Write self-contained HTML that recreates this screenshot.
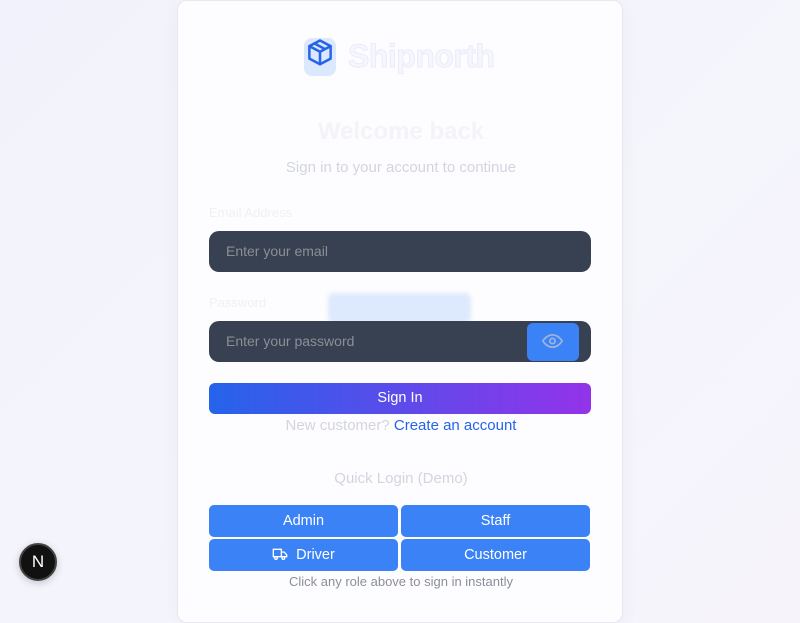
<!DOCTYPE html>
<html><head><style>
*{box-sizing:border-box;margin:0;padding:0}
body{width:800px;height:623px;overflow:hidden;background:linear-gradient(135deg,#f1f2fb,#f5f5fc 60%,#f6f3fb);font-family:"Liberation Sans",sans-serif;position:relative}
.card{position:absolute;left:177px;top:0px;width:446px;height:623px;background:#fdfdff;border:1px solid #e8e8f0;border-radius:10px;box-shadow:0 4px 20px rgba(0,0,0,.04)}
.abs{position:absolute}
.input{position:absolute;left:31px;width:382px;height:41px;background:#374151;border-radius:10px;color:#8b8f97;font-size:14px;padding-left:17px;line-height:41px}
.btn{position:absolute;background:#3b82f6;color:#fff;font-size:14.5px;text-align:center;border-radius:5px;line-height:32px;height:32px;width:189px}
</style></head><body>
<div class="card">
 <div class="abs" style="left:126px;top:37px;width:32px;height:38px;background:#dbe8fd;border-radius:8px"></div>
 <svg class="abs" style="left:127px;top:37px" width="30" height="30" viewBox="0 0 24 24" fill="none" stroke="#2563eb" stroke-width="2" stroke-linejoin="round" stroke-linecap="round"><path d="M12 2l8.5 4.5v10L12 21l-8.5-4.5v-10z"/><path d="M3.5 6.5L12 11l8.5-4.5M12 11v10M7.5 4.3l8.5 4.6"/></svg>
 <div class="abs" style="left:170px;top:37px;font-size:32px;font-weight:bold;color:#f6f6fd;-webkit-text-stroke:1px #ebebfa;letter-spacing:-0.5px">Shipnorth</div>
 <div class="abs" style="left:0;width:446px;text-align:center;top:117px;font-size:24px;font-weight:bold;color:#f3f3f8">Welcome back</div>
 <div class="abs" style="left:0;width:446px;text-align:center;top:158px;font-size:15px;color:#d3d5de">Sign in to your account to continue</div>
 <div class="abs" style="left:31px;top:204px;font-size:13px;color:#f0f0f5">Email Address</div>
 <div class="input" style="top:230px">Enter your email</div>
 <div class="abs" style="left:31px;top:294px;font-size:13px;color:#f0f0f5">Password</div>
 <div class="abs" style="left:150px;top:292px;width:143px;height:30px;background:#dde9fc;border-radius:6px;filter:blur(2px)"></div>
 <div class="input" style="top:320px">Enter your password</div>
 <div class="abs" style="left:349px;top:322px;width:52px;height:38px;background:#3b82f6;border-radius:6px"></div>
 <svg class="abs" style="left:364px;top:331px" width="21" height="18" viewBox="0 0 24 20" fill="none" stroke="#9cb4dc" stroke-width="2"><path d="M1 10s4-7 11-7 11 7 11 7-4 7-11 7S1 10 1 10z"/><circle cx="12" cy="10" r="3"/></svg>
 <div class="abs" style="left:31px;top:382px;width:382px;height:31px;border-radius:6px;background:linear-gradient(90deg,#2563eb,#9333ea);color:#fff;font-size:14.5px;text-align:center;line-height:31px">Sign In</div>
 <div class="abs" style="left:0;width:446px;text-align:center;top:416px;font-size:15px;color:#d3d5de">New customer? <span style="color:#2563eb">Create an account</span></div>
 <div class="abs" style="left:0;width:446px;text-align:center;top:469px;font-size:15px;color:#d3d5de">Quick Login (Demo)</div>
 <div class="btn" style="left:31px;top:504px">Admin</div>
 <div class="btn" style="left:223px;top:504px">Staff</div>
 <div class="btn" style="left:31px;top:538px"><svg style="vertical-align:-2px;margin-right:8px" width="16" height="14" viewBox="0 0 24 20" fill="none" stroke="#fff" stroke-width="2"><path d="M2 3h12v11H2zM14 7h4l4 4v3h-8"/><circle cx="6" cy="16" r="2"/><circle cx="17" cy="16" r="2"/></svg>Driver</div>
 <div class="btn" style="left:223px;top:538px">Customer</div>
 <div class="abs" style="left:0;width:446px;text-align:center;top:573px;font-size:13px;color:#8b8f99">Click any role above to sign in instantly</div>
</div>
<div class="abs" style="left:19px;top:543px;width:38px;height:38px;border-radius:50%;background:#111;border:2px solid #444;color:#fff;font-size:17px;text-align:center;line-height:34px;box-shadow:0 2px 8px rgba(0,0,0,.2)">N</div>
</body></html>
